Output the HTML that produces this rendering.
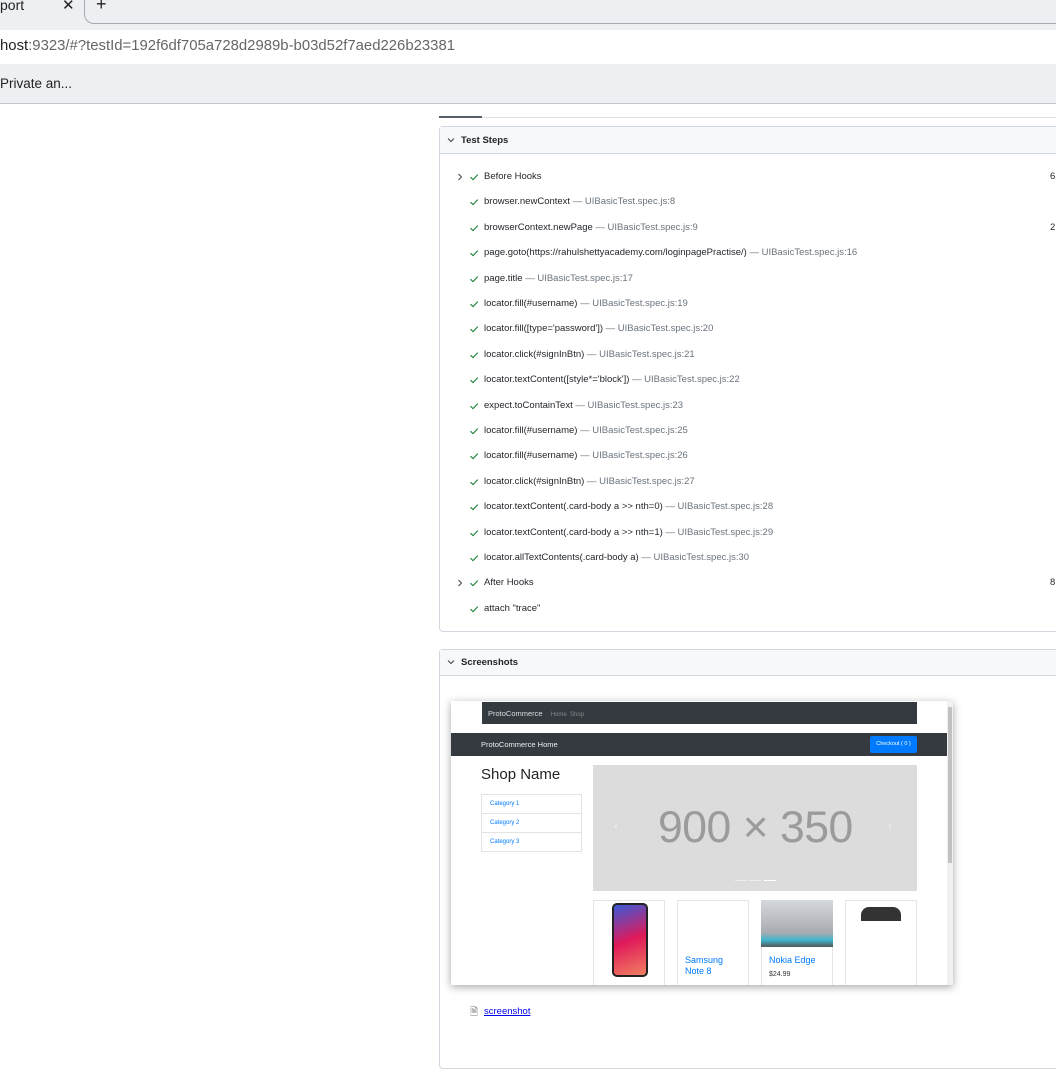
<!DOCTYPE html>
<html><head><meta charset="utf-8"><style>
*{margin:0;padding:0;box-sizing:border-box}
body{width:1056px;height:1024px;overflow:hidden;background:#fff;font-family:"Liberation Sans",sans-serif;position:relative}
.abs{position:absolute}
.chrome{font-family:"Liberation Sans",sans-serif}
.row{position:absolute;left:0;font-size:9.5px;color:#1f2328;white-space:nowrap}
.row .ck{position:absolute;left:29px;top:1px}
.row .tx{position:absolute;left:44px;top:0}
.row .ch{position:absolute;left:15px;top:1px}
.g{color:#6a737d}
</style></head><body>
<svg width="0" height="0" style="position:absolute">
<defs>
<symbol id="ck" viewBox="0 0 10 10"><path d="M1.5 5.2 L4 7.6 L8.8 2.6" fill="none" stroke="#1a7f37" stroke-width="1.1"/></symbol>
<symbol id="rt" viewBox="0 0 10 10"><path d="M3.5 2 L6.5 5 L3.5 8" fill="none" stroke="#444" stroke-width="1"/></symbol>
<symbol id="dn" viewBox="0 0 10 10"><path d="M2 3.5 L5 6.5 L8 3.5" fill="none" stroke="#444" stroke-width="1"/></symbol>
</defs></svg>
<div class="abs" style="left:0;top:0;width:1056px;height:30px;background:#eeeff2"></div>
<div class="abs" style="left:84px;top:-10px;width:990px;height:34px;border-left:1px solid #a8a8ae;border-bottom:1px solid #a8a8ae;border-bottom-left-radius:10px"></div>
<div class="abs chrome" style="left:0;top:-3px;font-size:14px;color:#222">port</div>
<div class="abs chrome" style="left:62px;top:-4px;font-size:15px;color:#222">✕</div>
<div class="abs chrome" style="left:96px;top:-6px;font-size:18px;color:#222">+</div>
<div class="abs" style="left:0;top:30px;width:1056px;height:34px;background:#fff"></div>
<div class="abs chrome" style="left:0;top:38px;font-size:14.9px;color:#222">host<span style="color:#666">:9323/#?testId=192f6df705a728d2989b-b03d52f7aed226b23381</span></div>
<div class="abs" style="left:0;top:64px;width:1056px;height:40px;background:#eeeff2;border-bottom:1px solid #c4c4ca"></div>
<div class="abs chrome" style="left:0;top:76px;font-size:13.5px;color:#222">Private an...</div>

<div class="abs" style="left:439px;top:117px;width:617px;height:1px;background:#dcdfe3"></div>
<div class="abs" style="left:439px;top:116px;width:43px;height:2px;background:#57606a"></div>

<div class="abs" style="left:439px;top:126px;width:640px;height:506px;border:1px solid #d0d7de;border-radius:4px">
 <div style="height:27px;background:#f6f8fa;border-bottom:1px solid #d0d7de;position:relative">
  <svg class="abs" style="left:6px;top:8px" width="10" height="10"><use href="#dn"/></svg>
  <span class="abs" style="left:21px;top:8px;font-size:9.5px;font-weight:bold;color:#1f2328">Test Steps</span>
 </div>
 <div class="abs" style="left:0;top:44px;width:640px">
  <div class="row" style="top:0"><svg class="ch" width="10" height="10"><use href="#rt"/></svg><svg class="ck" width="10" height="10"><use href="#ck"/></svg><span class="tx">Before Hooks</span><span class="abs" style="left:610px">6</span></div>
  <div class="row" style="top:25.4px"><svg class="ck" width="10" height="10"><use href="#ck"/></svg><span class="tx">browser.newContext <span class="g">— UIBasicTest.spec.js:8</span></span></div>
  <div class="row" style="top:50.8px"><svg class="ck" width="10" height="10"><use href="#ck"/></svg><span class="tx">browserContext.newPage <span class="g">— UIBasicTest.spec.js:9</span></span><span class="abs" style="left:610px">2</span></div>
  <div class="row" style="top:76.2px"><svg class="ck" width="10" height="10"><use href="#ck"/></svg><span class="tx">page.goto(https://rahulshettyacademy.com/loginpagePractise/) <span class="g">— UIBasicTest.spec.js:16</span></span></div>
  <div class="row" style="top:101.6px"><svg class="ck" width="10" height="10"><use href="#ck"/></svg><span class="tx">page.title <span class="g">— UIBasicTest.spec.js:17</span></span></div>
  <div class="row" style="top:127px"><svg class="ck" width="10" height="10"><use href="#ck"/></svg><span class="tx">locator.fill(#username) <span class="g">— UIBasicTest.spec.js:19</span></span></div>
  <div class="row" style="top:152.4px"><svg class="ck" width="10" height="10"><use href="#ck"/></svg><span class="tx">locator.fill([type='password']) <span class="g">— UIBasicTest.spec.js:20</span></span></div>
  <div class="row" style="top:177.8px"><svg class="ck" width="10" height="10"><use href="#ck"/></svg><span class="tx">locator.click(#signInBtn) <span class="g">— UIBasicTest.spec.js:21</span></span></div>
  <div class="row" style="top:203.2px"><svg class="ck" width="10" height="10"><use href="#ck"/></svg><span class="tx">locator.textContent([style*='block']) <span class="g">— UIBasicTest.spec.js:22</span></span></div>
  <div class="row" style="top:228.6px"><svg class="ck" width="10" height="10"><use href="#ck"/></svg><span class="tx">expect.toContainText <span class="g">— UIBasicTest.spec.js:23</span></span></div>
  <div class="row" style="top:254px"><svg class="ck" width="10" height="10"><use href="#ck"/></svg><span class="tx">locator.fill(#username) <span class="g">— UIBasicTest.spec.js:25</span></span></div>
  <div class="row" style="top:279.4px"><svg class="ck" width="10" height="10"><use href="#ck"/></svg><span class="tx">locator.fill(#username) <span class="g">— UIBasicTest.spec.js:26</span></span></div>
  <div class="row" style="top:304.8px"><svg class="ck" width="10" height="10"><use href="#ck"/></svg><span class="tx">locator.click(#signInBtn) <span class="g">— UIBasicTest.spec.js:27</span></span></div>
  <div class="row" style="top:330.2px"><svg class="ck" width="10" height="10"><use href="#ck"/></svg><span class="tx">locator.textContent(.card-body a &gt;&gt; nth=0) <span class="g">— UIBasicTest.spec.js:28</span></span></div>
  <div class="row" style="top:355.6px"><svg class="ck" width="10" height="10"><use href="#ck"/></svg><span class="tx">locator.textContent(.card-body a &gt;&gt; nth=1) <span class="g">— UIBasicTest.spec.js:29</span></span></div>
  <div class="row" style="top:381px"><svg class="ck" width="10" height="10"><use href="#ck"/></svg><span class="tx">locator.allTextContents(.card-body a) <span class="g">— UIBasicTest.spec.js:30</span></span></div>
  <div class="row" style="top:406.4px"><svg class="ch" width="10" height="10"><use href="#rt"/></svg><svg class="ck" width="10" height="10"><use href="#ck"/></svg><span class="tx">After Hooks</span><span class="abs" style="left:610px">8</span></div>
  <div class="row" style="top:431.8px"><svg class="ck" width="10" height="10"><use href="#ck"/></svg><span class="tx">attach "trace"</span></div>
 </div>
</div>

<div class="abs" style="left:439px;top:649px;width:640px;height:420px;border:1px solid #d0d7de;border-radius:4px">
 <div style="height:26px;background:#f6f8fa;border-bottom:1px solid #d0d7de;position:relative">
  <svg class="abs" style="left:6px;top:7px" width="10" height="10"><use href="#dn"/></svg>
  <span class="abs" style="left:21px;top:7px;font-size:9.5px;font-weight:bold;color:#1f2328">Screenshots</span>
 </div>
</div>

<div class="abs" style="left:451px;top:701px;width:502px;height:284px;background:#fff;box-shadow:0 2px 8px rgba(0,0,0,.35);overflow:hidden">
 <div class="abs" style="left:31px;top:1px;width:435px;height:22px;background:#343a40"></div>
 <div class="abs" style="left:37px;top:8px;font-size:7.5px;color:#ddd">ProtoCommerce <span style="color:#888;font-size:6px;margin-left:6px">Home&nbsp;&nbsp;Shop</span></div>
 <div class="abs" style="left:0;top:32px;width:496px;height:23px;background:#343a40"></div>
 <div class="abs" style="left:30px;top:39px;font-size:7.5px;color:#eee">ProtoCommerce Home</div>
 <div class="abs" style="left:419px;top:35px;width:47px;height:17px;background:#007bff;border-radius:2px;color:#fff;font-size:5.5px;text-align:center;line-height:17px">Checkout ( 0 )</div>
 <div class="abs" style="left:30px;top:65px;font-size:15px;color:#222">Shop Name</div>
 <div class="abs" style="left:30px;top:93px;width:101px;height:58px;border:1px solid #e3e3e3">
  <div style="height:19px;border-bottom:1px solid #e3e3e3;font-size:6px;color:#007bff;padding:6px 0 0 8px">Category 1</div>
  <div style="height:19px;border-bottom:1px solid #e3e3e3;font-size:6px;color:#007bff;padding:6px 0 0 8px">Category 2</div>
  <div style="font-size:6px;color:#007bff;padding:6px 0 0 8px">Category 3</div>
 </div>
 <div class="abs" style="left:142px;top:64px;width:324px;height:126px;background:#dcdcdc"></div>
 <div class="abs" style="left:207px;top:102px;font-size:44.5px;color:#9b9b9b;letter-spacing:-0.5px">900 × 350</div>
 <div class="abs" style="left:163px;top:118px;font-size:12px;color:#eee">‹</div>
 <div class="abs" style="left:437px;top:118px;font-size:12px;color:#eee">›</div>
 <div class="abs" style="left:284px;top:179px;width:12px;height:1px;background:#eee"></div>
 <div class="abs" style="left:298px;top:179px;width:12px;height:1px;background:#eee"></div>
 <div class="abs" style="left:313px;top:179px;width:12px;height:1px;background:#fff"></div>
 <div class="abs" style="left:142px;top:199px;width:72px;height:90px;border:1px solid #e5e5e5"></div>
 <div class="abs" style="left:161px;top:202px;width:36px;height:74px;background:linear-gradient(160deg,#3a5bd9,#e0195a 50%,#f08060);border:2px solid #222;border-radius:5px"></div>
 <div class="abs" style="left:226px;top:199px;width:72px;height:90px;border:1px solid #e5e5e5"></div>
 <div class="abs" style="left:234px;top:254px;font-size:9px;color:#007bff;line-height:11px">Samsung<br>Note 8</div>
 <div class="abs" style="left:310px;top:199px;width:72px;height:90px;border:1px solid #e5e5e5"></div>
 <div class="abs" style="left:310px;top:199px;width:72px;height:47px;background:linear-gradient(180deg,#d5d8dc,#a8acb0 70%,#3fb6d0 85%,#555)"></div>
 <div class="abs" style="left:318px;top:254px;font-size:9px;color:#007bff">Nokia Edge</div>
 <div class="abs" style="left:318px;top:270px;font-size:7px;color:#333">$24.99</div>
 <div class="abs" style="left:394px;top:199px;width:72px;height:90px;border:1px solid #e5e5e5"></div>
 <div class="abs" style="left:410px;top:206px;width:40px;height:14px;background:#333;border-radius:8px 8px 0 0"></div>
 <div class="abs" style="left:496px;top:0;width:6px;height:284px;background:#f1f1f1"></div>
 <div class="abs" style="left:497px;top:6px;width:4px;height:156px;background:#c1c1c1"></div>
</div>

<div class="abs" style="left:470px;top:1005px;font-size:10px;color:#777">🗎</div>
<div class="abs" style="left:484px;top:1006px;font-size:9.5px;color:#0000ee;text-decoration:underline">screenshot</div>
</body></html>
